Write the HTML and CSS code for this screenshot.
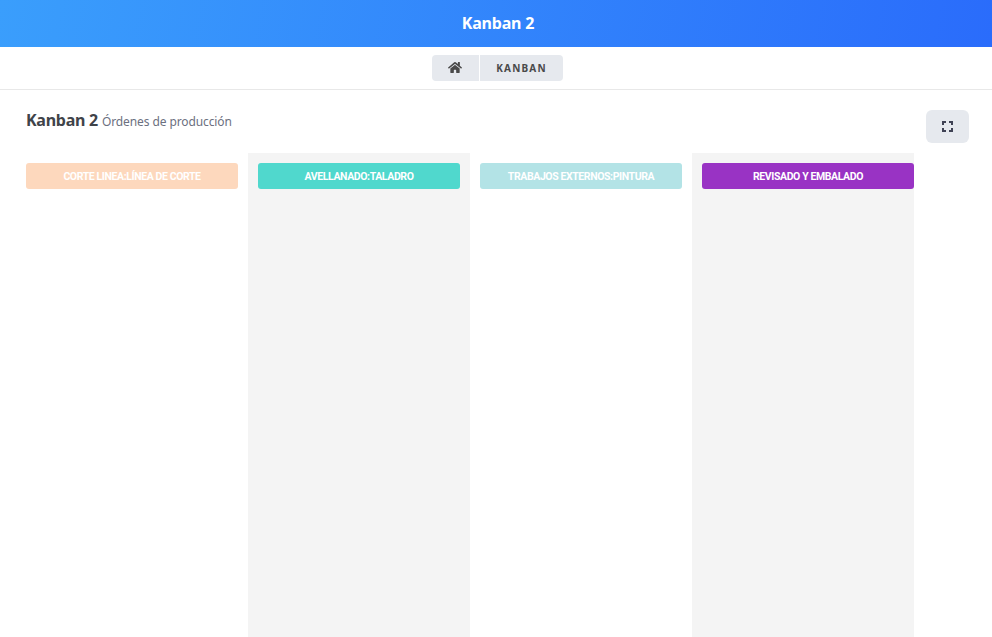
FILE: index.html
```html
<!DOCTYPE html>
<html lang="es">
<head>
<meta charset="utf-8">
<title>Kanban 2</title>
<link rel="stylesheet" href="styles.css">
</head>
<body>
<header class="topbar"><h1 class="topbar-title">Kanban 2</h1></header>
<nav class="crumbbar">
  <div class="crumbs">
    <a class="crumb crumb-home" aria-label="Inicio">
      <svg class="home-icon" viewBox="0 0 576 512" width="14" height="13"><path fill="#4a4a4a" d="M280.37 148.26L96 300.11V464a16 16 0 0 0 16 16l112.06-.29a16 16 0 0 0 15.92-16V368a16 16 0 0 1 16-16h64a16 16 0 0 1 16 16v95.64a16 16 0 0 0 16 16.05L464 480a16 16 0 0 0 16-16V300L295.67 148.26a12.19 12.19 0 0 0-15.3 0zM571.6 251.47L488 182.56V44.05a12 12 0 0 0-12-12h-56a12 12 0 0 0-12 12v72.61L318.47 43a48 48 0 0 0-61 0L4.34 251.47a12 12 0 0 0-1.6 16.9l25.5 31A12 12 0 0 0 45.15 301l235.22-193.74a12.19 12.19 0 0 1 15.3 0L530.9 301a12 12 0 0 0 16.9-1.6l25.5-31a12 12 0 0 0-1.7-16.93z"/></svg>
    </a>
    <a class="crumb crumb-text">KANBAN</a>
  </div>
</nav>
<main class="content">
  <div class="heading">
    <h2 class="title">Kanban 2 <small class="subtitle">Órdenes de producción</small></h2>
    <button class="fs-btn" aria-label="Pantalla completa">
      <svg viewBox="0 0 11 11" width="11" height="11"><path fill="none" stroke="#3f4254" stroke-width="2" d="M1 4V1h3M7 1h3v3M10 7v3H7M4 10H1V7"/></svg>
    </button>
  </div>
  <div class="board">
    <section class="col col-first"><div class="card card-peach">CORTE LINEA:LÍNEA DE CORTE</div></section>
    <section class="col col-shaded"><div class="card card-teal">AVELLANADO:TALADRO</div></section>
    <section class="col"><div class="card card-aqua">TRABAJOS EXTERNOS:PINTURA</div></section>
    <section class="col col-shaded col-last"><div class="card card-purple">REVISADO Y EMBALADO</div></section>
  </div>
</main>
</body>
</html>
```
FILE: styles.css
```css
* { box-sizing: border-box; }
html, body { height: 100%; }
body {
  margin: 0;
  height: 637px;
  overflow: hidden;
  background: #fff;
  font-family: "Noto Sans", "Open Sans", sans-serif;
  color: #3f4254;
  display: flex;
  flex-direction: column;
}
.topbar {
  height: 47px;
  flex: none;
  background: linear-gradient(100deg, #3a9efc 0%, #2a6cfb 100%);
  display: flex;
  align-items: center;
  justify-content: center;
  padding: 0 0 2px 4px;
}
.topbar-title {
  margin: 0;
  font-size: 16px;
  font-weight: 700;
  letter-spacing: -0.2px;
  color: #fff;
}
.crumbbar {
  height: 43px;
  flex: none;
  border-bottom: 1px solid #e8e8e8;
  display: flex;
  justify-content: center;
  padding-top: 8px;
  padding-left: 3px;
}
.crumbs { display: flex; gap: 1px; height: 26px; }
.crumb {
  background: #e6e9ee;
  display: flex;
  align-items: center;
  justify-content: center;
}
.crumb-home { width: 47px; border-radius: 4px 0 0 4px; padding: 0 2px 2px 0; }
.crumb-text {
  width: 83px;
  border-radius: 0 4px 4px 0;
  font-size: 10px;
  font-weight: 700;
  letter-spacing: 1.2px;
  color: #4a4a4a;
}
.content {
  flex: 1;
  min-height: 0;
  display: flex;
  flex-direction: column;
  padding: 0 23px 0 26px;
}
.heading {
  height: 63px;
  flex: none;
  display: flex;
  justify-content: space-between;
  align-items: flex-start;
  padding-top: 19px;
}
.title {
  margin: 0;
  font-size: 16px;
  line-height: 22px;
  font-weight: 700;
  letter-spacing: -0.25px;
  color: #3f4349;
}
.subtitle {
  font-size: 12px;
  font-weight: 400;
  letter-spacing: -0.1px;
  color: #6c7080;
}
.fs-btn {
  width: 43px;
  height: 33px;
  margin-top: 1px;
  border: 0;
  border-radius: 6px;
  background: #e6e9ee;
  display: flex;
  align-items: center;
  justify-content: center;
  padding: 0;
}
.board { flex: 1; display: flex; min-height: 0; width: 888px; }
.col { width: 222px; padding: 10px 10px 0; }
.col-first { padding-left: 0; }
.col-last { padding-right: 0; }
.col-shaded { background: #f4f4f4; }
.card {
  height: 26px;
  border-radius: 3px;
  color: #fff;
  font-family: Roboto, "Noto Sans", sans-serif;
  font-size: 10.500px;
  font-weight: 700;
  display: flex;
  align-items: center;
  justify-content: center;
  white-space: nowrap;
  letter-spacing: -0.4px;
}
.card-peach { background: #fdd8bd; }
.card-teal { background: #50d8cd; }
.card-aqua { background: #b3e3e6; }
.card-purple { background: #9933c4; }
```
